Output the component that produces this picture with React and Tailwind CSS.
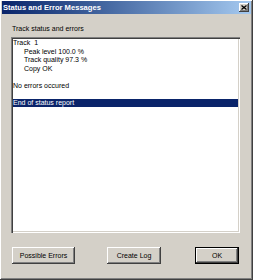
const raised =
  "shadow-[inset_-1px_-1px_0_#404040,inset_1px_1px_0_#ffffff,inset_-2px_-2px_0_#808080]";

function Button({ label, width, isDefault }) {
  return (
    <div
      className={`flex h-[17px] items-center justify-center bg-[#d4d0c8] ${width} ${
        isDefault ? "border border-black" : ""
      }`}
    >
      <div className={`flex h-full w-full items-center justify-center ${raised}`}>
        <span className="text-[7px] leading-[9px] text-black">{label}</span>
      </div>
    </div>
  );
}

const lines = [
  { text: "Track  1", indent: false },
  { text: "Peak level 100.0 %", indent: true },
  { text: "Track quality 97.3 %", indent: true },
  { text: "Copy OK", indent: true },
  { text: "", indent: false },
  { text: "No errors occured", indent: false },
  { text: "", indent: false },
  { text: "End of status report", indent: false, selected: true },
];

export default function App() {
  return (
    <div
      className={`flex h-[280px] w-[253px] flex-col bg-[#d4d0c8] px-[2px] pt-[1px] ${raised}`}
      style={{ fontFamily: '"Liberation Sans", Arial, sans-serif' }}
    >
      <div className="flex h-[13px] items-center justify-between bg-gradient-to-r from-[#0a246a] to-[#a6caf0] pl-[1px]">
        <span className="whitespace-pre text-[7.6px] font-bold leading-[13px] text-white">
          Status and Error Messages
        </span>
        <div className={`mr-[2px] flex h-[9px] w-[10px] items-center justify-center bg-[#d4d0c8] ${raised}`}>
          <svg width="6" height="5" viewBox="0 0 6 5">
            <path d="M0.5 0.5 L5.5 4.5 M5.5 0.5 L0.5 4.5" stroke="#000" strokeWidth="1.3" />
          </svg>
        </div>
      </div>

      <div className="ml-[10px] mt-[10px] text-[7px] leading-[9px] text-black">Track status and errors</div>

      <div className="ml-[9px] mt-[4px] h-[196px] w-[229px] bg-white p-[2px] shadow-[inset_1px_1px_0_#808080,inset_2px_2px_0_#404040,inset_-1px_-1px_0_#ffffff,inset_-2px_-2px_0_#d4d0c8]">
        {lines.map((line, index) => (
          <div
            key={index}
            className={`h-[8.5px] whitespace-pre text-[7px] leading-[8.5px] ${
              line.selected ? "bg-[#0a246a] text-white" : "text-black"
            } ${line.indent ? "pl-[11px]" : ""}`}
          >
            {line.text}
          </div>
        ))}
      </div>

      <div className="mt-[14px] flex items-center pl-[10px]">
        <Button label="Possible Errors" width="w-[63px]" />
        <div className="ml-[32px]">
          <Button label="Create Log" width="w-[54px]" />
        </div>
        <div className="ml-[34px]">
          <Button label="OK" width="w-[44px]" isDefault />
        </div>
      </div>
    </div>
  );
}
